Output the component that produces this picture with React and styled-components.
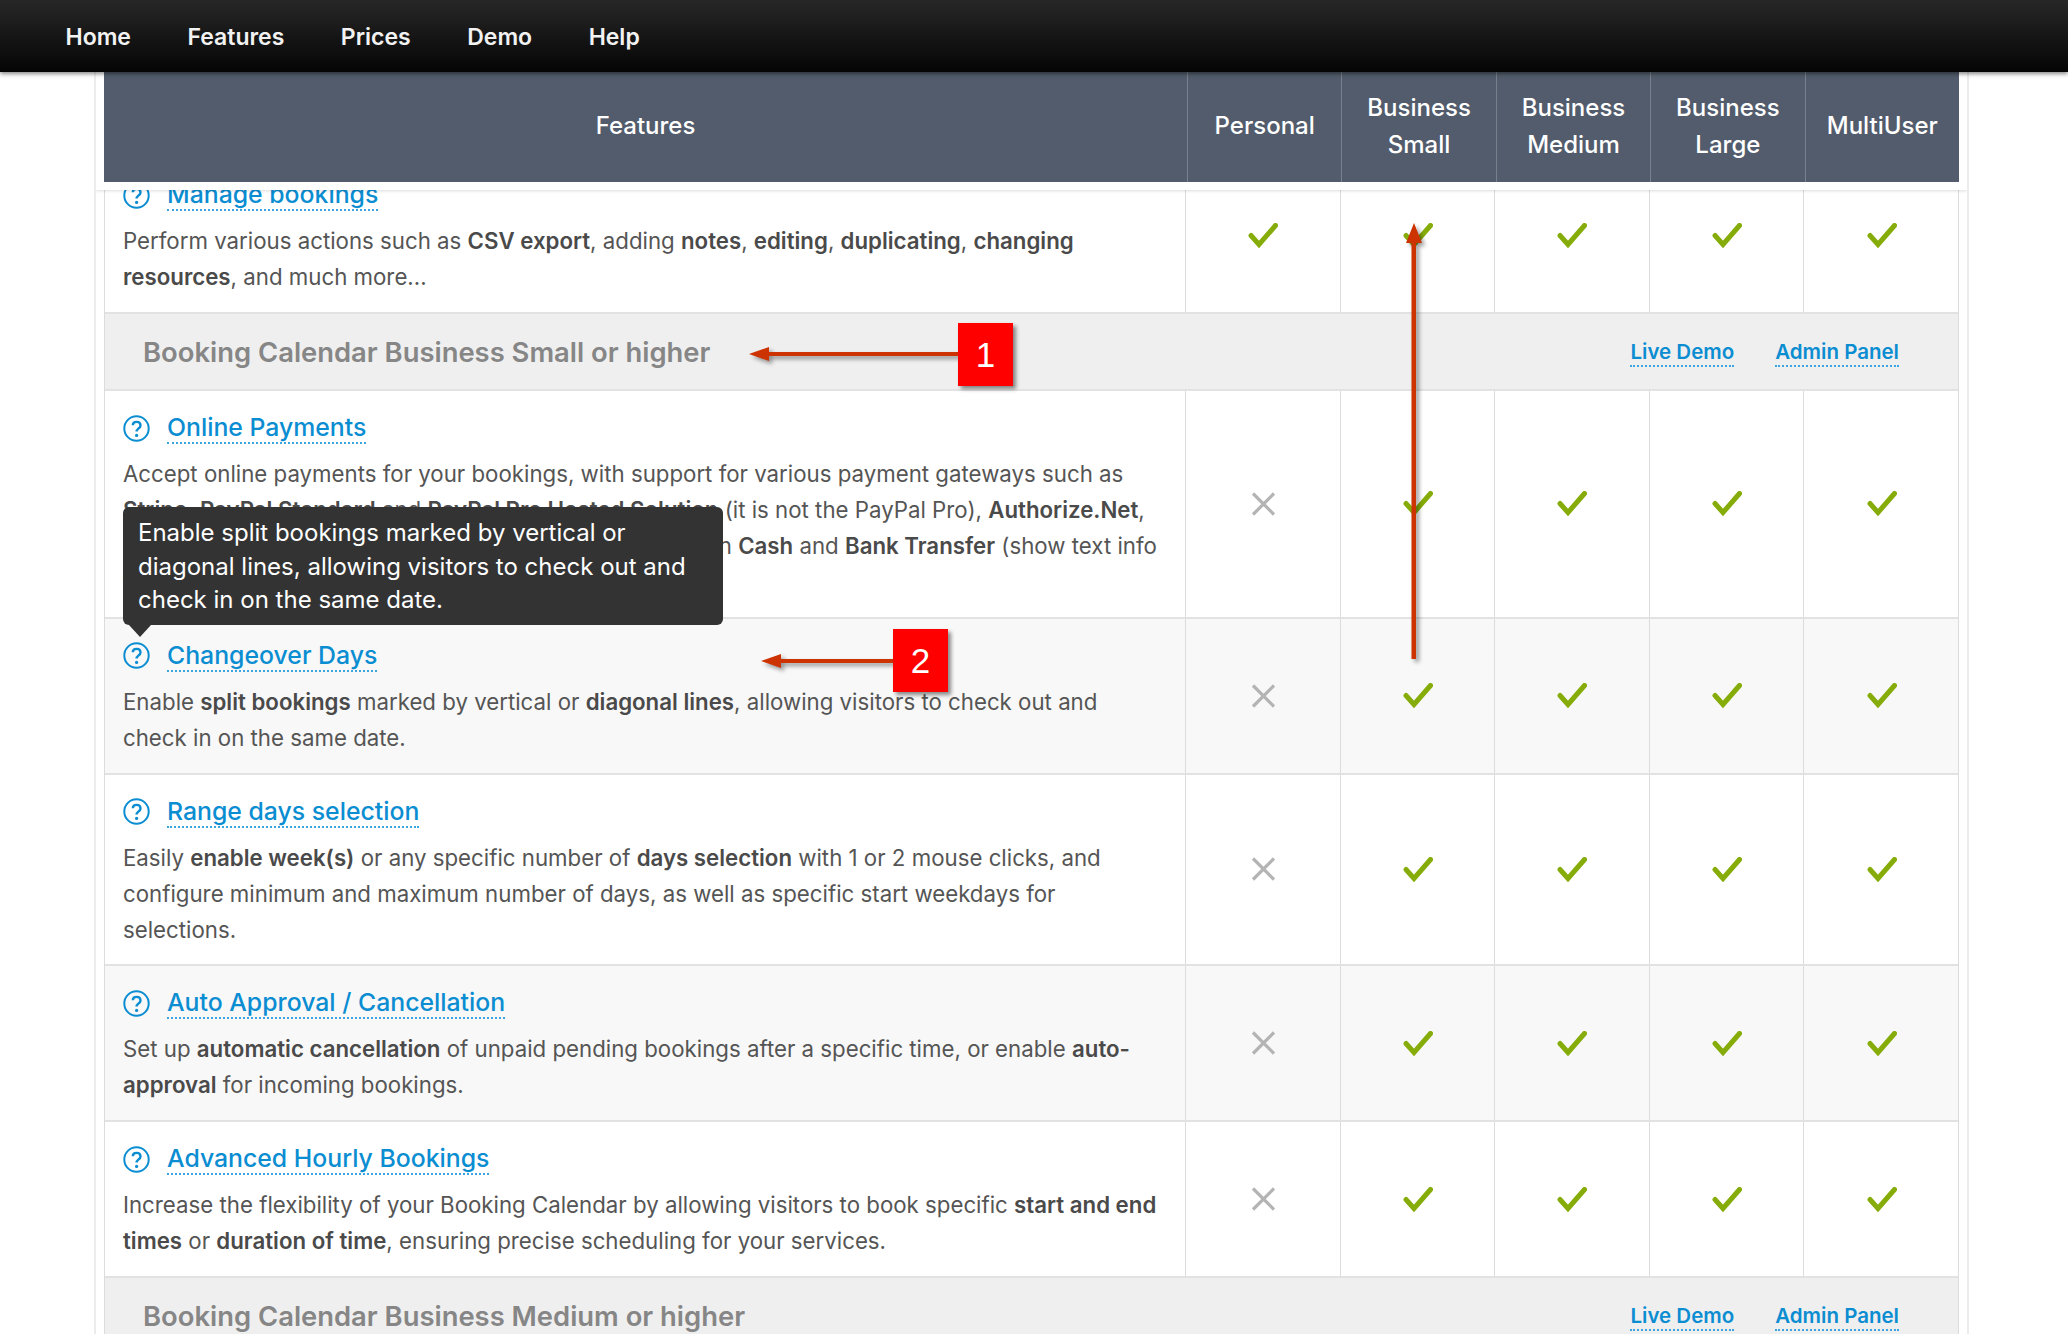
import React from 'react'
import styled, { createGlobalStyle } from 'styled-components'

const GlobalStyle = createGlobalStyle`
  html, body { margin: 0; padding: 0; background: #fff; }
  body { font-family: Inter, "Liberation Sans", sans-serif; color: #555; }
`

const Page = styled.div`
  position: relative;
  width: 2068px;
  height: 1334px;
  overflow: hidden;
  background: #fff;
`
const Nav = styled.nav`
  position: relative;
  z-index: 3;
  height: 72px;
  box-sizing: border-box;
  display: flex;
  align-items: center;
  gap: 56.5px;
  padding: 1px 0 0 65.5px;
  background: linear-gradient(#272727, #050505);
  box-shadow: 0 2px 4px rgba(0, 0, 0, 0.45);
`
const NavLink = styled.a`
  font-size: 23px;
  font-weight: 600;
  color: #f2f2f2;
`
const Wrap = styled.div`
  width: 1875px;
  height: 1262px;
  margin-left: 94px;
  border-left: 2px solid #ececec;
  border-right: 2px solid #ececec;
  box-sizing: border-box;
  overflow: hidden;
`
const HeadStrip = styled.div`
  position: relative;
  z-index: 2;
  height: 118px;
  box-sizing: border-box;
  padding: 0 8px 8px 8px;
  background: #fff;
  box-shadow: 0 1px 3px rgba(0, 0, 0, 0.14);
`
const HeadRow = styled.div`
  height: 110px;
  display: grid;
  grid-template-columns: 1083px repeat(5, 154.4px);
  background: #525c6c;
`
const HeadCell = styled.div`
  display: flex;
  align-items: center;
  justify-content: center;
  box-sizing: border-box;
  padding-bottom: 3px;
  text-align: center;
  font-size: 24px;
  font-weight: 500;
  line-height: 37px;
  color: #fff;
  & + & { border-left: 1px solid #78808d; }
`
const Body = styled.div`
  margin: -32px 0 0 8px;
  width: 1855px;
  border-left: 1px solid #dcdcdc;
  border-right: 1px solid #dcdcdc;
  box-sizing: border-box;
`
const Row = styled.div`
  display: grid;
  grid-template-columns: 1080px repeat(5, 154.6px);
  min-height: ${p => p.$lines * 35.75 + 84.5}px;
  box-sizing: border-box;
  border-bottom: 2px solid #e2e2e2;
  background: ${p => (p.$shaded ? '#f8f8f8' : '#fff')};
`
const FeatureCell = styled.div`
  padding: 19px 23px 0 18px;
`
const TitleLine = styled.div`
  display: flex;
  align-items: center;
  gap: 17px;
  height: 36px;
  margin-bottom: 10px;
`
const HelpIcon = styled.svg`
  width: 27px;
  height: 27px;
  flex: none;
`
const Title = styled.a`
  font-size: 24.8px;
  font-weight: 500;
  line-height: 30px;
  color: #0b8dd2;
  border-bottom: 2px dotted #3ba6dd;
`
const Text = styled.p`
  margin: 0;
  font-size: 22.26px;
  line-height: 36px;
  color: #555;
  b { font-weight: 600; color: #4a4a4a; }
`
const MarkCell = styled.div`
  display: flex;
  align-items: center;
  justify-content: center;
  border-left: 1px solid #dcdcdc;
`
const SectionRow = styled.div`
  display: flex;
  align-items: center;
  justify-content: space-between;
  height: 77px;
  box-sizing: border-box;
  padding: 0 59px 0 38px;
  background: #efefef;
  border-bottom: 2px solid #e2e2e2;
`
const SectionTitle = styled.h3`
  margin: 0;
  font-size: 27.4px;
  font-weight: 600;
  color: #868686;
`
const SectionLinks = styled.div`
  display: flex;
  gap: 41px;
  margin-top: 1px;
`
const SectionLink = styled.a`
  font-size: 20.5px;
  font-weight: 600;
  line-height: 27px;
  color: #0b8dd2;
  border-bottom: 2px dotted #3ba6dd;
`
const Tooltip = styled.div`
  position: absolute;
  left: 123px;
  top: 507px;
  width: 600px;
  height: 118px;
  box-sizing: border-box;
  padding: 9px 15px;
  background: #333;
  border-radius: 6px;
  font-size: 24px;
  line-height: 33.5px;
  color: #fff;
  &::after {
    content: '';
    position: absolute;
    left: 6px;
    top: 118px;
    border: 11px solid transparent;
    border-top: 12px solid #333;
    border-bottom: 0;
  }
`
const Marker = styled.div`
  position: absolute;
  left: ${p => p.$x}px;
  top: ${p => p.$y}px;
  width: 55px;
  height: 63px;
  display: flex;
  align-items: center;
  justify-content: center;
  background: #f00;
  color: #fff;
  font-family: "Liberation Sans", sans-serif;
  font-size: 35px;
  box-shadow: 3px 3px 4px rgba(0, 0, 0, 0.45);
`
const Arrows = styled.svg`
  position: absolute;
  left: 0;
  top: 0;
  pointer-events: none;
  filter: drop-shadow(3px 3px 2px rgba(0, 0, 0, 0.4));
`

const Check = () => (
  <svg width="31" height="25" viewBox="0 0 31 25">
    <path d="M4 12.5 L12 21.5 L28.500 2.500" stroke="#86ac0a" strokeWidth="5" strokeLinecap="round" strokeLinejoin="miter" fill="none" />
  </svg>
)
const Cross = () => (
  <svg width="25" height="24" viewBox="0 0 25 24">
    <path d="M3 1.500 L24 22.500 M24 1.500 L3 22.500" stroke="#b4b4b4" strokeWidth="3.2" fill="none" />
  </svg>
)
const Help = () => (
  <HelpIcon viewBox="0 0 27 27">
    <circle cx="13.5" cy="13.5" r="12.2" fill="none" stroke="#0b8dd2" strokeWidth="2" />
    <path d="M9.8 10.2 C10 5.8 17.5 5.8 17.5 10.4 C17.5 13.4 13.6 13.4 13.6 16.6" fill="none" stroke="#0b8dd2" strokeWidth="2.4" />
    <circle cx="13.6" cy="20.4" r="1.6" fill="#0b8dd2" />
  </HelpIcon>
)

const features = [
  {
    title: 'Manage bookings',
    lines: 2,
    personal: true,
    text: <>Perform various actions such as <b>CSV export</b>, adding <b>notes</b>, <b>editing</b>, <b>duplicating</b>, <b>changing resources</b>, and much more...</>,
  },
  { section: 'Booking Calendar Business Small or higher' },
  {
    title: 'Online Payments',
    lines: 4,
    text: <>Accept online payments for your bookings, with support for various payment gateways such as <b>Stripe</b>, <b>PayPal Standard</b> and <b>PayPal Pro Hosted Solution</b> (it is not the PayPal Pro), <b>Authorize.Net</b>, <b>Sage</b>, <b>Redsys</b>, <b>iDEAL</b>, <b>iPay88</b>, <b>Bank Links</b>, and also pay in <b>Cash</b> and <b>Bank Transfer</b> (show text info for customers).</>,
  },
  {
    title: 'Changeover Days',
    lines: 2,
    shaded: true,
    text: <>Enable <b>split bookings</b> marked by vertical or <b>diagonal lines</b>, allowing visitors to check out and check in on the same date.</>,
  },
  {
    title: 'Range days selection',
    lines: 3,
    text: <>Easily <b>enable week(s)</b> or any specific number of <b>days selection</b> with 1 or 2 mouse clicks, and configure minimum and maximum number of days, as well as specific start weekdays for selections.</>,
  },
  {
    title: 'Auto Approval / Cancellation',
    lines: 2,
    shaded: true,
    text: <>Set up <b>automatic cancellation</b> of unpaid pending bookings after a specific time, or enable <b>auto-approval</b> for incoming bookings.</>,
  },
  {
    title: 'Advanced Hourly Bookings',
    lines: 2,
    text: <>Increase the flexibility of your Booking Calendar by allowing visitors to book specific <b>start and end times</b> or <b>duration of time</b>, ensuring precise scheduling for your services.</>,
  },
  { section: 'Booking Calendar Business Medium or higher' },
]

const App = () => {
  return (
    <Page>
      <GlobalStyle />
      <Nav>
        {['Home', 'Features', 'Prices', 'Demo', 'Help'].map(n => <NavLink key={n}>{n}</NavLink>)}
      </Nav>
      <Wrap>
        <HeadStrip>
          <HeadRow>
            <HeadCell>Features</HeadCell>
            <HeadCell>Personal</HeadCell>
            <HeadCell>Business<br />Small</HeadCell>
            <HeadCell>Business<br />Medium</HeadCell>
            <HeadCell>Business<br />Large</HeadCell>
            <HeadCell>MultiUser</HeadCell>
          </HeadRow>
        </HeadStrip>
        <Body>
          {features.map(f => f.section ? (
            <SectionRow key={f.section}>
              <SectionTitle>{f.section}</SectionTitle>
              <SectionLinks>
                <SectionLink>Live Demo</SectionLink>
                <SectionLink>Admin Panel</SectionLink>
              </SectionLinks>
            </SectionRow>
          ) : (
            <Row key={f.title} $lines={f.lines} $shaded={f.shaded}>
              <FeatureCell>
                <TitleLine><Help /><Title>{f.title}</Title></TitleLine>
                <Text>{f.text}</Text>
              </FeatureCell>
              <MarkCell>{f.personal ? <Check /> : <Cross />}</MarkCell>
              <MarkCell><Check /></MarkCell>
              <MarkCell><Check /></MarkCell>
              <MarkCell><Check /></MarkCell>
              <MarkCell><Check /></MarkCell>
            </Row>
          ))}
        </Body>
      </Wrap>
      <Tooltip>Enable split bookings marked by vertical or diagonal lines, allowing visitors to check out and check in on the same date.</Tooltip>
      <Arrows width="2068" height="1334" viewBox="0 0 2068 1334">
        <path d="M958 352 H769 V347 L749 354 L769 361 V356 H958 Z" fill="#cc3300" />
        <path d="M893 659 H781 V654 L761 661 L781 668 V663 H893 Z" fill="#cc3300" />
        <path d="M1411.500 659 V243 H1406 L1414 223 L1422 243 H1416 V659 Z" fill="#cc3300" />
      </Arrows>
      <Marker $x={958} $y={323}>1</Marker>
      <Marker $x={893} $y={629}>2</Marker>
    </Page>
  )
}

export default App
